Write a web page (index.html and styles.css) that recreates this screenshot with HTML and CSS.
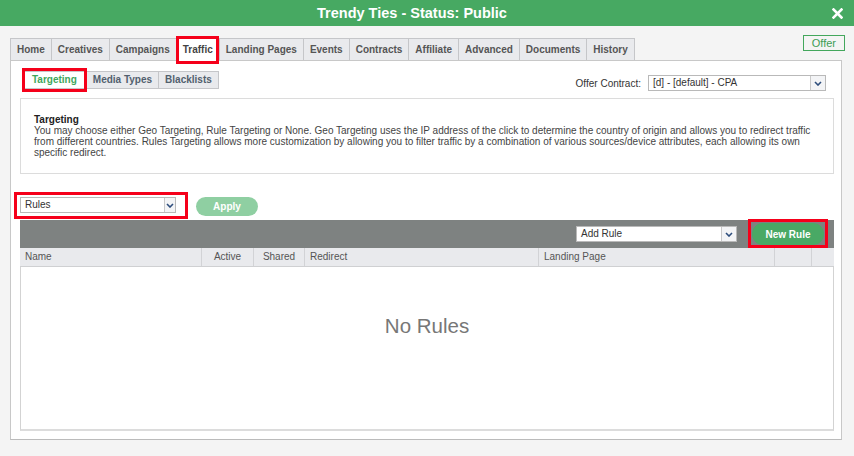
FILE: index.html
```html
<!DOCTYPE html>
<html lang="en">
<head>
  <meta charset="UTF-8" />
  <title>Trendy Ties - Status: Public</title>
  <link rel="stylesheet" href="styles.css">
</head>
<body>
  <header class="titlebar">
    <span></span>
    <h1>Trendy Ties - Status: Public</h1>
    <svg class="close" width="11" height="11" viewBox="0 0 11 11"><path d="M1.5 1.5l8 8M9.5 1.5l-8 8" stroke="#fff" stroke-width="2.6" stroke-linecap="square"/></svg>
  </header>

  <div class="page">
    <div class="tabbar">
      <ul class="tabs">
        <li>Home</li>
        <li>Creatives</li>
        <li>Campaigns</li>
        <li class="active marked mark-tab">Traffic</li>
        <li>Landing Pages</li>
        <li>Events</li>
        <li>Contracts</li>
        <li>Affiliate</li>
        <li>Advanced</li>
        <li>Documents</li>
        <li>History</li>
      </ul>
      <span class="badge">Offer</span>
    </div>

    <!-- Traffic tab -->
    <section class="panel">
      <div class="subbar">
        <ul class="subtabs">
          <li class="active marked mark-sub">Targeting</li>
          <li>Media Types</li>
          <li>Blacklists</li>
        </ul>
        <div class="contract">
          <span>Offer Contract:</span>
          <div class="select contract-select">
            <span class="val">[d] - [default] - CPA</span>
            <span class="arrow"><svg width="8" height="5" viewBox="0 0 8 5"><path d="M1 1l3 3 3-3" fill="none" stroke="#2d4d7c" stroke-width="1.6"/></svg></span>
          </div>
        </div>
      </div>

      <div class="info">
        <h3>Targeting</h3>
        <p>You may choose either Geo Targeting, Rule Targeting or None. Geo Targeting uses the IP address of the click to determine the country of origin and allows you to redirect traffic from different countries. Rules Targeting allows more customization by allowing you to filter traffic by a combination of various sources/device attributes, each allowing its own specific redirect.</p>
      </div>

      <div class="rulebar">
        <div class="marked mark-rules">
          <div class="select rules-select">
            <span class="val">Rules</span>
            <span class="arrow small"><svg width="8" height="5" viewBox="0 0 8 5"><path d="M1 1l3 3 3-3" fill="none" stroke="#2d4d7c" stroke-width="1.6"/></svg></span>
          </div>
        </div>
        <button type="button" class="apply">Apply</button>
      </div>

      <div class="grid">
        <div class="toolbar">
          <div class="select addrule-select">
            <span class="val">Add Rule</span>
            <span class="arrow"><svg width="8" height="5" viewBox="0 0 8 5"><path d="M1 1l3 3 3-3" fill="none" stroke="#2d4d7c" stroke-width="1.6"/></svg></span>
          </div>
          <button type="button" class="newrule marked mark-new">New Rule</button>
        </div>
        <div class="head">
          <span>Name</span>
          <span class="center">Active</span>
          <span class="center">Shared</span>
          <span>Redirect</span>
          <span>Landing Page</span>
          <span></span>
          <span></span>
        </div>
        <div class="empty">No Rules</div>
      </div>
    </section>
  </div>
</body>
</html>
```

FILE: styles.css
```css
body {
  margin: 0;
  background: #f4f4f4;
  font-family: "Liberation Sans", Arial, sans-serif;
  font-size: 10px;
  color: #333;
}
ul {
  list-style: none;
  margin: 0;
  padding: 0;
}
.titlebar {
  height: 26px;
  background: #47a962;
  color: #fff;
  display: grid;
  grid-template-columns: 1fr auto 1fr;
  align-items: center;
}
.titlebar h1 {
  margin: 0 30px 0 0;
  font-size: 14.5px;
  font-weight: bold;
}
.close {
  justify-self: end;
  margin-right: 11px;
}
.page {
  padding: 12px 12px 0 10px;
}
.tabbar {
  display: flex;
  justify-content: space-between;
  align-items: flex-start;
}
.tabs {
  display: flex;
}
.tabs li {
  height: 21px;
  line-height: 21px;
  padding: 0 6px;
  border: 1px solid #c5c6c9;
  border-left: 0;
  border-bottom: 0;
  background: #e9eaed;
  color: #555;
  font-weight: bold;
}
.tabs li:first-child {
  border-left: 1px solid #c5c6c9;
}
.tabs li.active {
  background: #fff;
  color: #444;
  height: 22px;
  margin-bottom: -1px;
  z-index: 1;
}
.badge {
  margin: -3px -3px 0 0;
  height: 14px;
  line-height: 14px;
  padding: 0 8px;
  border: 1px solid #43a75c;
  color: #3d9d55;
  font-size: 11px;
}
.panel {
  background: #fff;
  border: 1px solid #c8c8c8;
  border-bottom-color: #bbb;
  padding: 10px 7px 8px 9px;
}

/* annotation boxes */
.marked {
  position: relative;
}
.marked::after {
  content: "";
  position: absolute;
  border: 3px solid #f5001a;
  pointer-events: none;
}
.mark-tab::after { top: -3px; bottom: -3px; left: -1px; right: 0; }
.mark-sub::after { top: -4px; bottom: -4px; left: -1px; right: -1px; }
.mark-rules::after { top: -5px; bottom: -6px; left: -6px; right: -12px; }
.mark-new::after { top: -4px; bottom: -3px; left: -4px; right: -4px; }

.subbar {
  display: flex;
  justify-content: space-between;
  align-items: flex-start;
  margin-left: 2px;
}
.subtabs {
  display: flex;
}
.subtabs li {
  height: 16px;
  line-height: 16px;
  padding: 0 6px;
  border: 1px solid #c5c6c9;
  border-left: 0;
  background: #e9eaed;
  color: #52606e;
  font-weight: bold;
}
.subtabs li:first-child {
  border-left: 1px solid #c5c6c9;
}
.subtabs li.active {
  background: #fff;
  color: #3ea65b;
  padding: 0 9px;
}
.contract {
  display: flex;
  align-items: center;
  gap: 7px;
  margin: 4px 8px 0 0;
}
.select {
  display: flex;
  height: 14px;
  border: 1px solid #b9b9b9;
  background: #fff;
  color: #333;
}
.select .val {
  flex: 1;
  padding-left: 4px;
  line-height: 14px;
}
.select .arrow {
  width: 14px;
  border-left: 1px solid #c9c9c9;
  background: #f3f4f6;
  display: flex;
  align-items: center;
  justify-content: center;
}
.select .arrow.small {
  width: 10px;
}
.contract-select { width: 176px; }
.rules-select { width: 154px; }
.addrule-select { width: 159px; }
.info {
  margin-top: 7px;
  border: 1px solid #dcdcdc;
  padding: 15px 20px 15px 13px;
  line-height: 11px;
  color: #444;
}
.info h3 {
  margin: 0;
  font-size: 10px;
  color: #222;
}
.info p {
  margin: 0;
}
.rulebar {
  display: flex;
  align-items: flex-start;
  gap: 20px;
  margin-top: 23px;
}
.apply {
  width: 62px;
  height: 19px;
  border: 0;
  border-radius: 10px;
  background: #8fcfa2;
  color: #fff;
  font: bold 10px "Liberation Sans", Arial, sans-serif;
}
.grid {
  margin-top: 4px;
}
.toolbar {
  height: 28px;
  background: #7e8281;
  display: flex;
  align-items: center;
  justify-content: flex-end;
  gap: 15px;
  padding-right: 10px;
}
.newrule {
  width: 72px;
  height: 22px;
  border: 0;
  border-radius: 11px;
  background: #49a965;
  color: #fff;
  font: bold 10px "Liberation Sans", Arial, sans-serif;
}
.head {
  display: grid;
  grid-template-columns: 182px 52px 51px 234px 236px 37px 1fr;
  height: 18px;
  line-height: 18px;
  background: #e9eaed;
  border-bottom: 1px solid #cfd0d2;
  color: #555;
}
.head span {
  padding-left: 5px;
  border-right: 1px solid #d2d3d6;
}
.head span:last-child {
  border-right: 0;
}
.head .center {
  text-align: center;
  padding-left: 0;
}
.empty {
  box-sizing: border-box;
  height: 164px;
  padding-top: 47px;
  border: 1px solid #d3d3d3;
  border-top: 0;
  border-bottom: 2px solid #dcdcdc;
  text-align: center;
  line-height: 24px;
  font-size: 20.5px;
  color: #777;
}
```
